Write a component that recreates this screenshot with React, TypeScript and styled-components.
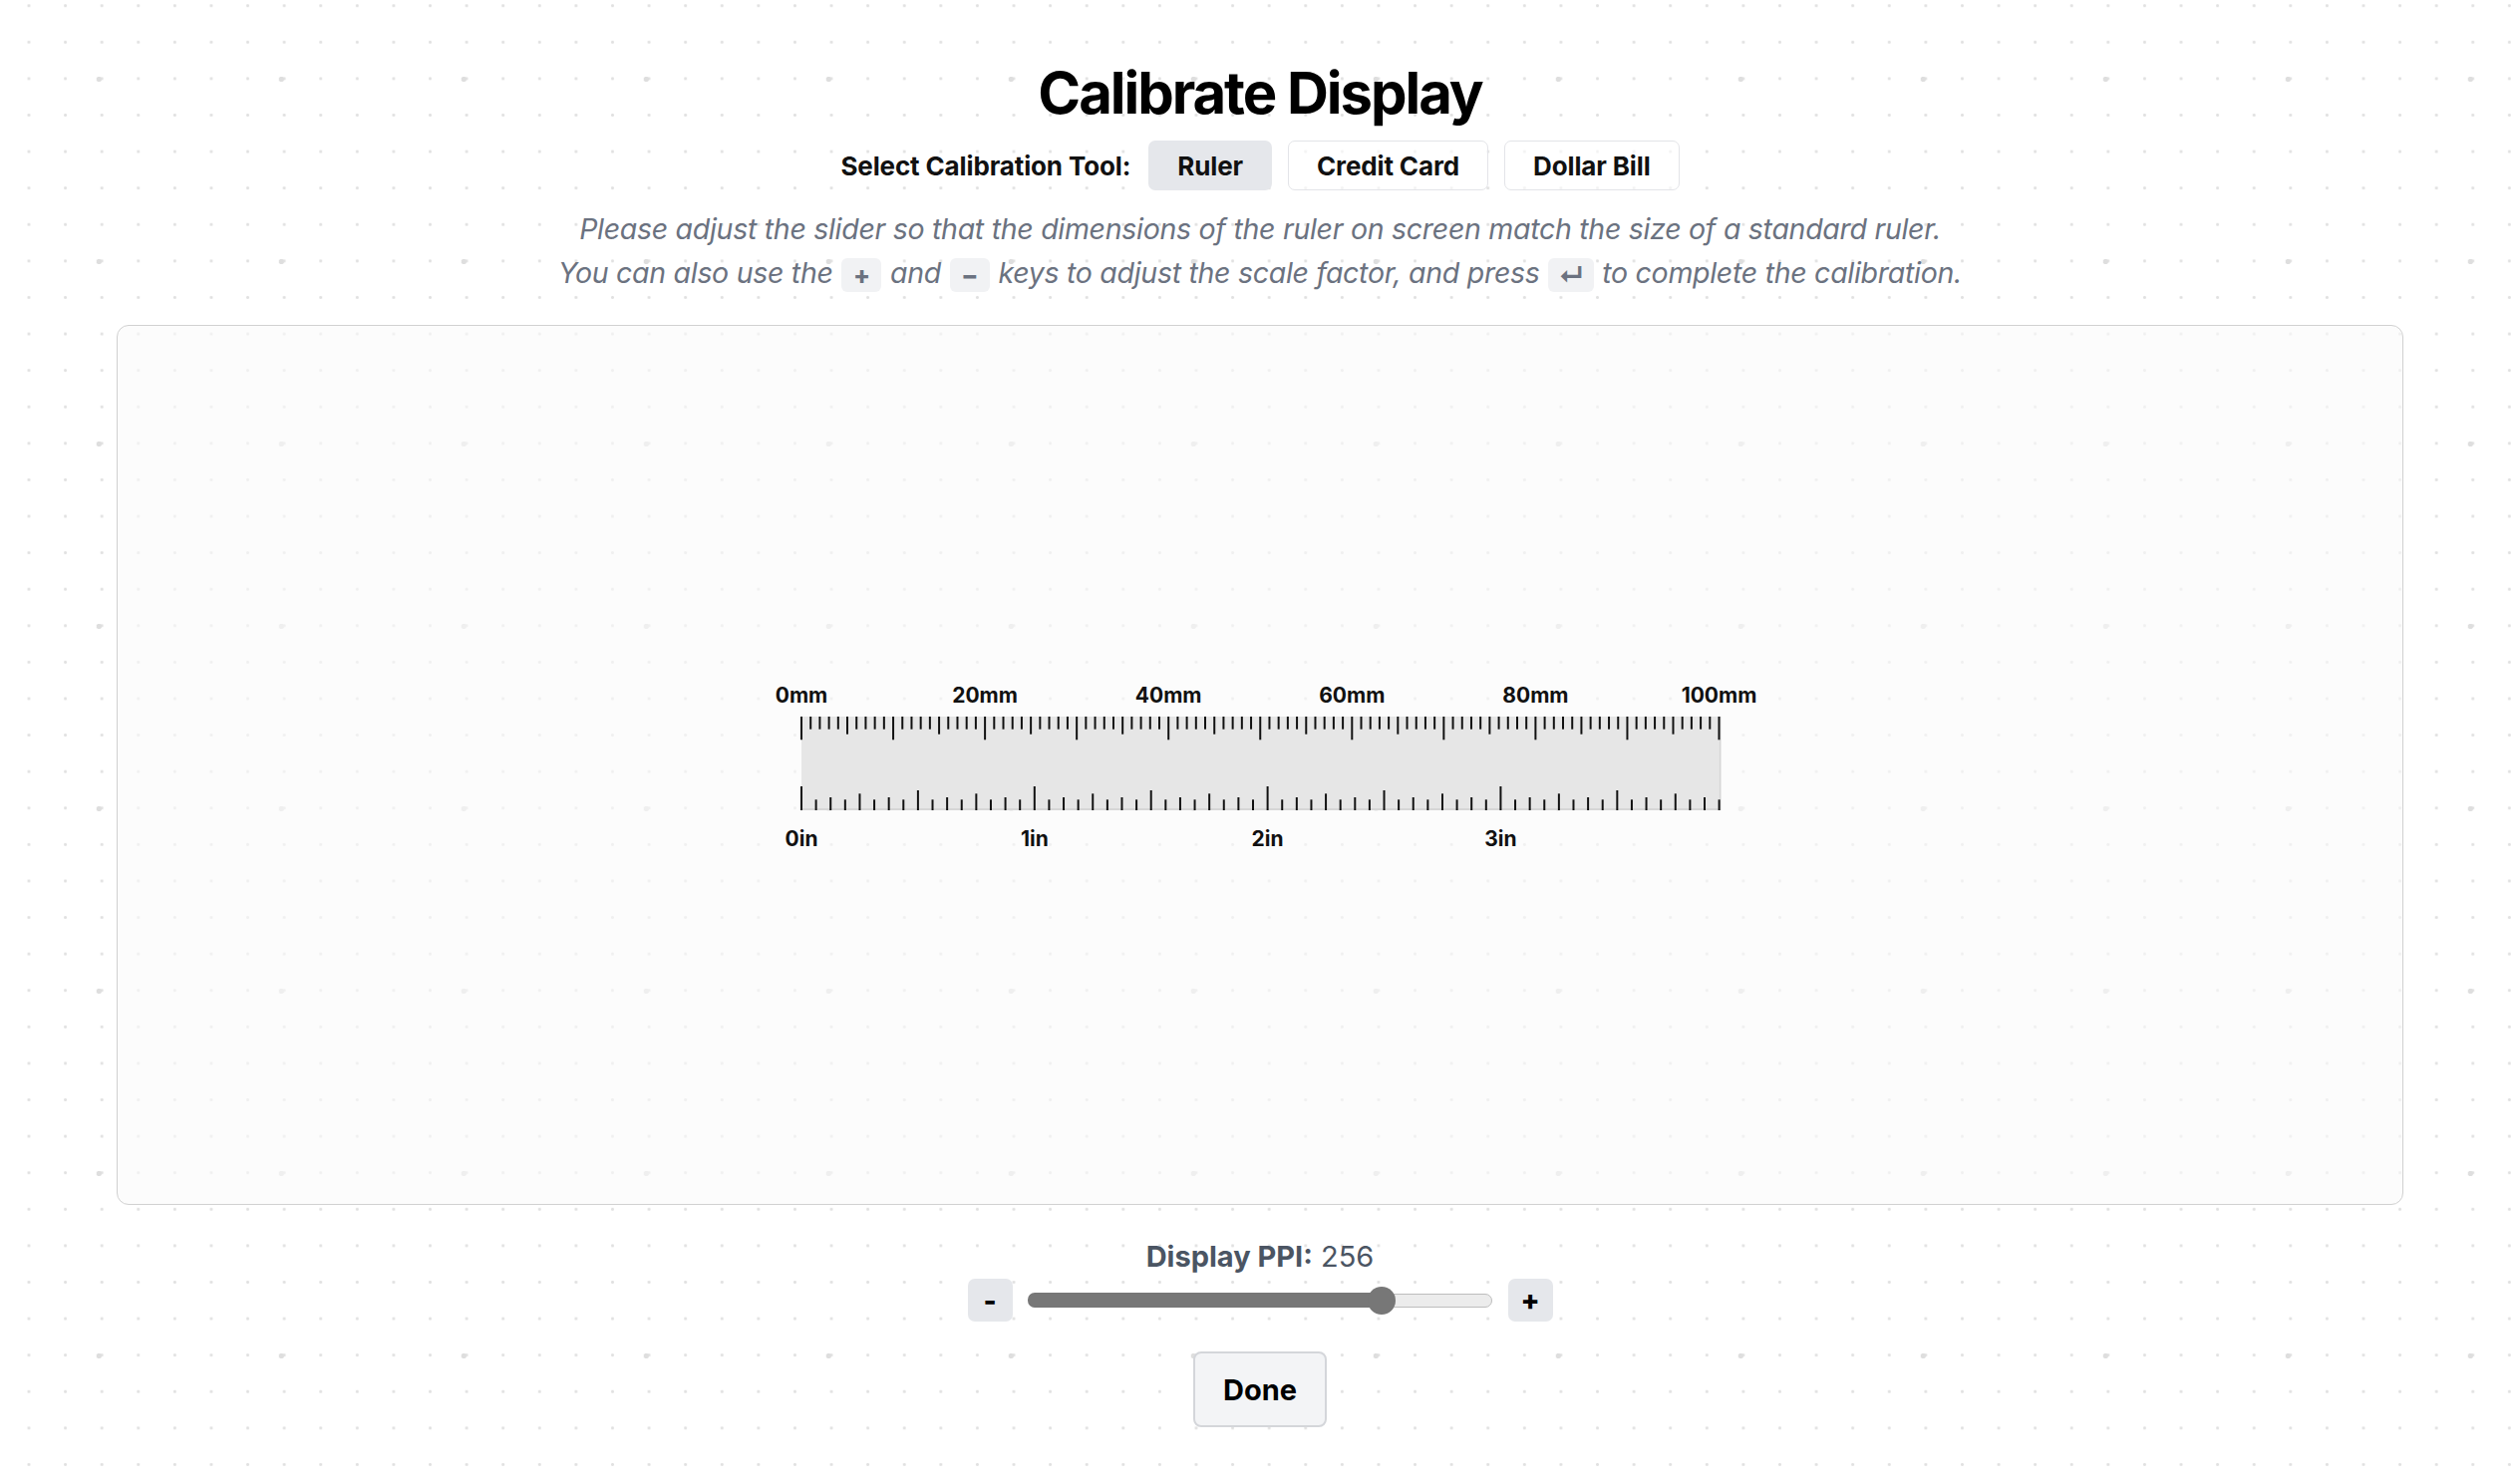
import * as React from 'react';
import styled, { createGlobalStyle } from 'styled-components';

const GlobalStyle = createGlobalStyle`
    html, body {
        margin: 0;
        padding: 0;
    }
    body {
        font-family: Inter, "Noto Sans", "Liberation Sans", sans-serif;
        color: #111111;
        background-color: #ffffff;
        background-image:
            radial-gradient(circle, #dedede 0, #dedede 2.4px, transparent 3px),
            radial-gradient(circle, #e1e1e1 0, #e1e1e1 1.2px, transparent 1.7px);
        background-size: 183px 183px, 36.6px 36.6px;
        background-position: 7.8px -12px, 10.7px -12.6px;
        min-height: 1489px;
    }
`

const Page = styled.div`
    display: flex;
    flex-direction: column;
    align-items: center;
    padding-top: 58px;
`

const Title = styled.h1`
    margin: 0;
    font-size: 58px;
    line-height: 70px;
    font-weight: 700;
    letter-spacing: -0.035em;
    color: #000000;
`

const ToolRow = styled.div`
    display: flex;
    align-items: center;
    gap: 16px;
    margin-top: 13px;
`

const ToolLabel = styled.span`
    font-size: 26px;
    font-weight: 700;
    letter-spacing: -0.005em;
    margin-right: 2px;
`

const ToolButton = styled.button<{ $active?: boolean }>`
    height: 50px;
    padding: 0 28px;
    font-family: inherit;
    font-size: 26px;
    font-weight: 700;
    letter-spacing: -0.005em;
    color: #111111;
    border-radius: 7px;
    border: 1.5px solid ${props => props.$active ? 'transparent' : '#e3e4e8'};
    background-color: ${props => props.$active ? '#e5e7eb' : 'rgba(255,255,255,0.6)'};
    cursor: pointer;
`

const Instructions = styled.div`
    margin-top: 17px;
    text-align: center;
    font-size: 28.5px;
    line-height: 44px;
    font-style: italic;
    color: #6b7280;
    letter-spacing: -0.01em;
`

const Key = styled.kbd`
    display: inline-block;
    min-width: 20px;
    height: 34px;
    line-height: 34px;
    padding: 0 10px;
    margin: 0 1px;
    vertical-align: middle;
    border-radius: 6px;
    background-color: #f1f2f4;
    font-family: inherit;
    font-size: 25px;
    font-style: normal;
    font-weight: 800;
    color: #6b7280;
`

const Card = styled.div`
    align-self: stretch;
    margin: 30px 117px 0;
    height: 883px;
    box-sizing: border-box;
    border: 1.5px solid #d1d1d1;
    border-radius: 12px;
    background-color: rgba(250, 250, 250, 0.6);
    display: flex;
    align-items: center;
    justify-content: center;
`

const PpiLabel = styled.div`
    margin-top: 32px;
    font-size: 29px;
    line-height: 40px;
    color: #4b5563;
`

const PpiStrong = styled.span`
    font-weight: 700;
`

const SliderRow = styled.div`
    display: flex;
    align-items: center;
    gap: 16px;
    margin-top: 2px;
`

const StepButton = styled.button`
    width: 45px;
    height: 43px;
    padding: 0;
    border: none;
    border-radius: 7px;
    background-color: #e5e7eb;
    font-family: inherit;
    font-size: 28px;
    font-weight: 800;
    color: #000000;
    display: flex;
    align-items: center;
    justify-content: center;
`

const Track = styled.div`
    position: relative;
    width: 465px;
    height: 14px;
    box-sizing: border-box;
    border: 1.5px solid #bdbdbd;
    border-radius: 7px;
    background-color: #ececec;
`

const TrackFill = styled.div`
    position: absolute;
    left: -1.5px;
    top: -1.5px;
    bottom: -1.5px;
    border-radius: 7px;
    background-color: #777777;
`

const Thumb = styled.div`
    position: absolute;
    top: 50%;
    width: 28px;
    height: 28px;
    margin-left: -14px;
    margin-top: -14px;
    border-radius: 50%;
    background-color: #777777;
`

const DoneButton = styled.button`
    margin-top: 30px;
    width: 134px;
    height: 76px;
    border: 2px solid #d4d6da;
    border-radius: 8px;
    background-color: #f3f4f6;
    font-family: inherit;
    font-size: 29px;
    font-weight: 700;
    color: #000000;
`

const PX_PER_MM = 9.205;
const PAD_X = 40;
const RULER_TOP = 42;
const RULER_H = 94;
const RULER_W = 100 * PX_PER_MM;

const Ruler = () => {
    const mmTicks = [];
    for (let k = 0; k <= 100; k++) {
        const len = k % 10 === 0 ? 23.3 : k % 5 === 0 ? 17.7 : 12.7;
        const x = PAD_X + k * PX_PER_MM;
        mmTicks.push(<line key={'mm' + k} x1={x} x2={x} y1={RULER_TOP} y2={RULER_TOP + len} />);
    }
    const inTicks = [];
    const bottom = RULER_TOP + RULER_H;
    for (let i = 0; i * 25.4 / 16 <= 100.05; i++) {
        const len = i % 16 === 0 ? 24 : i % 8 === 0 ? 20 : i % 4 === 0 ? 16.7 : i % 2 === 0 ? 13 : 10.7;
        const x = PAD_X + i * 25.4 / 16 * PX_PER_MM;
        inTicks.push(<line key={'in' + i} x1={x} x2={x} y1={bottom - len} y2={bottom} />);
    }
    const mmLabels = [0, 20, 40, 60, 80, 100];
    const inLabels = [0, 1, 2, 3];
    const width = RULER_W + PAD_X * 2;
    return (
        <svg width={width} height={182} viewBox={`0 0 ${width} 182`}>
            <rect x={PAD_X} y={RULER_TOP} width={RULER_W} height={RULER_H} fill="#e6e6e6" />
            <line x1={PAD_X} x2={PAD_X + RULER_W} y1={bottom - 1} y2={bottom - 1} stroke="#d6d6d6" strokeWidth={2} />
            <line x1={PAD_X + RULER_W + 1} x2={PAD_X + RULER_W + 1} y1={RULER_TOP} y2={bottom} stroke="#d6d6d6" strokeWidth={2} />
            <g stroke="#111111" strokeWidth={2}>
                {mmTicks}
                {inTicks}
            </g>
            <g fontFamily="Inter, 'Liberation Sans', sans-serif" fontSize={21} fontWeight={700} fill="#111111" textAnchor="middle">
                {mmLabels.map(v => (
                    <text key={'ml' + v} x={PAD_X + v * PX_PER_MM} y={28}>{v}mm</text>
                ))}
                {inLabels.map(v => (
                    <text key={'il' + v} x={PAD_X + v * 25.4 * PX_PER_MM} y={172}>{v}in</text>
                ))}
            </g>
        </svg>
    );
};

const MIN_PPI = 50;
const MAX_PPI = 320;

export default function App() {
    const ppi = 256;
    const pct = (ppi - MIN_PPI) / (MAX_PPI - MIN_PPI) * 100;
    return (
        <>
            <GlobalStyle />
            <Page>
                <Title>Calibrate Display</Title>
                <ToolRow>
                    <ToolLabel>Select Calibration Tool:</ToolLabel>
                    <ToolButton $active>Ruler</ToolButton>
                    <ToolButton>Credit Card</ToolButton>
                    <ToolButton>Dollar Bill</ToolButton>
                </ToolRow>
                <Instructions>
                    <div>Please adjust the slider so that the dimensions of the ruler on screen match the size of a standard ruler.</div>
                    <div>
                        You can also use the <Key>+</Key> and <Key>−</Key> keys to adjust the scale factor, and press <Key>↵</Key> to complete the calibration.
                    </div>
                </Instructions>
                <Card>
                    <Ruler />
                </Card>
                <PpiLabel>
                    <PpiStrong>Display PPI:</PpiStrong> {ppi}
                </PpiLabel>
                <SliderRow>
                    <StepButton>-</StepButton>
                    <Track>
                        <TrackFill style={{ width: `calc(${pct}% + 3px)` }} />
                        <Thumb style={{ left: `${pct}%` }} />
                    </Track>
                    <StepButton>+</StepButton>
                </SliderRow>
                <DoneButton>Done</DoneButton>
            </Page>
        </>
    );
}
